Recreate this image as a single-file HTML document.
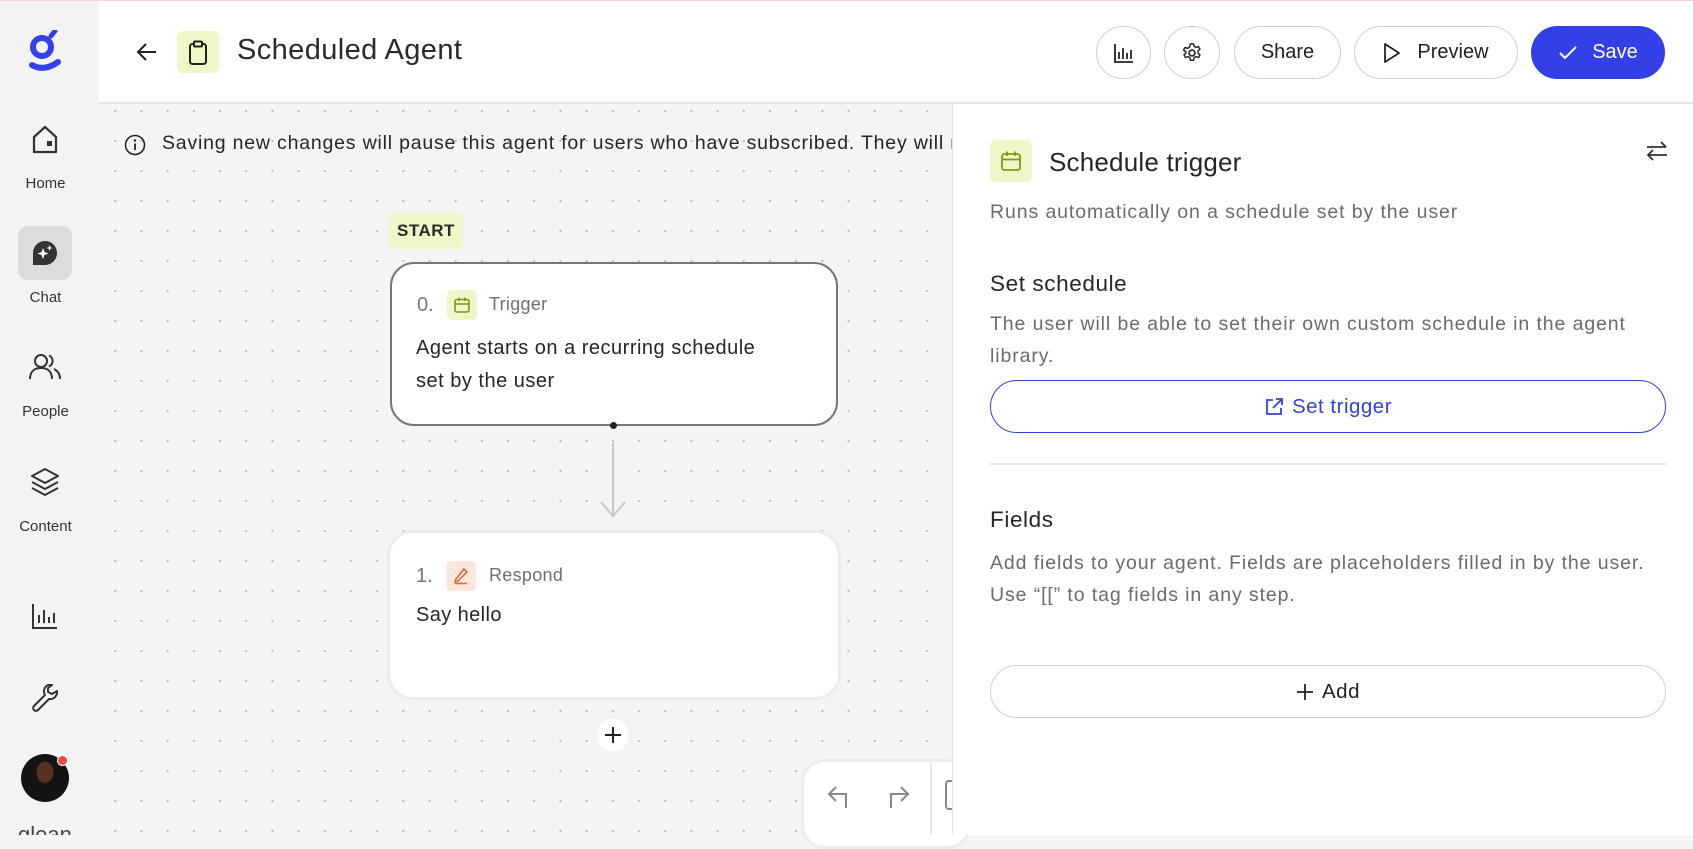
<!DOCTYPE html>
<html><head><meta charset="utf-8"><style>
*{box-sizing:border-box;margin:0;padding:0}
body{width:1693px;height:835px;overflow:hidden;position:relative;background:#f4f4f4;font-family:"Liberation Sans",sans-serif;color:#222}
.a{position:absolute}
.canvas{left:99px;top:104px;width:853px;height:731px;background-color:#f4f4f4;background-image:radial-gradient(circle,#b8b8b8 0.9px,transparent 1.2px);background-size:26.2px 30px;background-position:-23px -8px}
.side{left:0;top:0;width:99px;height:835px;background:#f3f3f3;overflow:hidden}
.lbl{width:99px;text-align:center;font-size:15px;color:#333;left:-4px}
.header{left:99px;top:0;width:1594px;height:104px;background:#fff;border-bottom:2px solid #e6e6e6}
.btn{border:1.5px solid #cfcfcf;border-radius:28px;background:#fff;display:flex;align-items:center;justify-content:center;font-size:20px;color:#222;height:53px;top:26px}
.panel{left:952px;top:104px;width:741px;height:731px;background:#fff;border-left:1.5px solid #e3e3e3}
.ptext{font-size:19.5px;color:#6b6b6b;line-height:32px;letter-spacing:0.9px}
.h2{font-size:22.5px;color:#262626;letter-spacing:0.6px}
</style></head><body>
<div class="a" style="left:0;top:0;width:1693px;height:1px;background:#f3d4da;z-index:5"></div>
<div class="a canvas"></div>
<div class="a side">
 <svg class="a" style="left:27px;top:30px" width="36" height="42" viewBox="0 0 36 42"><circle cx="15" cy="17" r="9" fill="none" stroke="#3342e8" stroke-width="6"/><path d="M24 6 L28 1" stroke="#3342e8" stroke-width="5" stroke-linecap="round"/><path d="M5 35 Q17 42 31 32" fill="none" stroke="#3342e8" stroke-width="6" stroke-linecap="round"/></svg>
 <svg class="a" style="left:31px;top:125px" width="28" height="30" viewBox="0 0 28 30"><path d="M3 12 L14 2 L25 12 V27 H3 Z" fill="none" stroke="#333" stroke-width="2.2" stroke-linejoin="round"/><rect x="16" y="16" width="5" height="5" fill="#333"/></svg>
 <div class="a lbl" style="top:175px;left:-4px">Home</div>
 <div class="a" style="left:18px;top:226px;width:54px;height:54px;background:#dcdcdc;border-radius:10px"></div>
 <svg class="a" style="left:30px;top:238px" width="30" height="30" viewBox="0 0 30 30"><path d="M15 3 A12 12 0 1 1 15 27 H3 V15 A12 12 0 0 1 15 3Z" fill="#333"/><path d="M13 10 L14.5 14 L18.5 15.5 L14.5 17 L13 21 L11.5 17 L7.5 15.5 L11.5 14Z" fill="#fff"/><path d="M19.5 7 L20.3 9.2 L22.5 10 L20.3 10.8 L19.5 13 L18.7 10.8 L16.5 10 L18.7 9.2Z" fill="#fff"/></svg>
 <div class="a lbl" style="top:289px">Chat</div>
 <svg class="a" style="left:28px;top:352px" width="34" height="30" viewBox="0 0 34 30"><circle cx="13" cy="9" r="6" fill="none" stroke="#333" stroke-width="2"/><path d="M2 27 C2 19 7 16 13 16 C19 16 24 19 24 27" fill="none" stroke="#333" stroke-width="2"/><path d="M21 3.5 A6 6 0 0 1 21 14.5 M26 17 C30 19 32 22 32 27" fill="none" stroke="#333" stroke-width="2"/></svg>
 <div class="a lbl" style="top:403px">People</div>
 <svg class="a" style="left:29px;top:466px" width="32" height="32" viewBox="0 0 32 32"><path d="M16 3 L29 10 L16 17 L3 10Z M3 16 L16 23 L29 16 M3 22 L16 29 L29 22" fill="none" stroke="#333" stroke-width="2" stroke-linejoin="round"/></svg>
 <div class="a lbl" style="top:518px">Content</div>
 <svg class="a" style="left:31px;top:602px" width="28" height="28" viewBox="0 0 28 28"><path d="M2 2 V26 H26 M8 21 V13 M13 21 V8 M18 21 V15 M23 21 V11" fill="none" stroke="#333" stroke-width="2"/></svg>
 <svg class="a" style="left:31px;top:682px" width="28" height="30" viewBox="0 0 28 30"><path d="M17 3 A7 7 0 0 0 14 13 L3 24 A2.5 2.5 0 0 0 7 28 L18 17 A7 7 0 0 0 26 9 L21 12 L17 10 L17 6 L21 3 Z" fill="none" stroke="#333" stroke-width="2" stroke-linejoin="round"/></svg>
 <div class="a" style="left:21px;top:754px;width:48px;height:48px;border-radius:50%;background:radial-gradient(ellipse at 50% 38%,#5a3022 0 8px,#141414 9px)"></div>
 <div class="a" style="left:57px;top:755px;width:11px;height:11px;border-radius:50%;background:#f04848;border:1.5px solid #fff"></div>
 <div class="a" style="left:18px;top:822px;font-size:22px;color:#444">glean</div>
</div>
<div class="a header">
 <svg class="a" style="left:37px;top:42px" width="22" height="20" viewBox="0 0 22 20"><path d="M20 10 H3 M10 2 L2 10 L10 18" fill="none" stroke="#222" stroke-width="2"/></svg>
 <div class="a" style="left:78px;top:31px;width:42px;height:42px;background:#eef7c8;border-radius:6px"></div>
 <svg class="a" style="left:88px;top:40px" width="22" height="26" viewBox="0 0 22 26"><rect x="3" y="4" width="16" height="20" rx="2.5" fill="none" stroke="#222" stroke-width="2"/><rect x="7" y="1.5" width="8" height="5" rx="1" fill="#eef7c8" stroke="#222" stroke-width="2"/></svg>
 <div class="a" style="left:138px;top:34px;font-size:29px;color:#2a2a2a;letter-spacing:0.4px">Scheduled Agent</div>
 <div class="a btn" style="left:997px;width:55px"><svg width="20" height="20" viewBox="0 0 20 20"><path d="M1 1 V19 H19 M5 16 V9 M9 16 V5 M13 16 V10 M17 16 V7" fill="none" stroke="#222" stroke-width="1.8"/></svg></div>
 <div class="a btn" style="left:1065px;width:56px"><svg width="22" height="22" viewBox="0 0 24 24"><circle cx="12" cy="12" r="3.2" fill="none" stroke="#222" stroke-width="1.8"/><path d="M10.3 2h3.4l.6 2.8 2 1.1 2.7-.9 1.7 2.9-2.1 1.9v2.3l2.1 1.9-1.7 2.9-2.7-.9-2 1.1-.6 2.8h-3.4l-.6-2.8-2-1.1-2.7.9-1.7-2.9 2.1-1.9V10.8L2.7 8.9l1.7-2.9 2.7.9 2-1.1z" fill="none" stroke="#222" stroke-width="1.6" stroke-linejoin="round"/></svg></div>
 <div class="a btn" style="left:1135px;width:107px">Share</div>
 <div class="a btn" style="left:1255px;width:164px"><svg width="18" height="22" viewBox="0 0 18 22" style="margin-right:16px"><path d="M2 2 L16 11 L2 20Z" fill="none" stroke="#222" stroke-width="1.8" stroke-linejoin="round"/></svg>Preview</div>
 <div class="a btn" style="left:1432px;width:134px;background:#3340e8;border-color:#3340e8;color:#fff"><svg width="20" height="16" viewBox="0 0 20 16" style="margin-right:14px"><path d="M2 8 L7 13 L18 2" fill="none" stroke="#fff" stroke-width="2"/></svg>Save</div>
</div>
<svg class="a" style="left:124px;top:134px" width="22" height="22" viewBox="0 0 22 22"><circle cx="11" cy="11" r="9.5" fill="none" stroke="#222" stroke-width="1.6"/><path d="M11 9.5 V16" stroke="#222" stroke-width="1.8"/><circle cx="11" cy="6.5" r="1.2" fill="#222"/></svg>
<div class="a" style="left:162px;top:132px;font-size:19.5px;letter-spacing:0.8px;color:#262626;white-space:nowrap;width:790px;overflow:hidden">Saving new changes will pause this agent for users who have subscribed. They will need to re-subscribe.</div>
<div class="a" style="left:389px;top:213px;width:74px;height:36px;background:#eef7c8;border-radius:6px;font-size:17px;font-weight:bold;color:#2a2a2a;display:flex;align-items:center;justify-content:center;letter-spacing:.5px">START</div>
<div class="a" style="left:390px;top:262px;width:448px;height:164px;background:#fff;border:2.5px solid #767676;border-radius:24px"></div>
<div class="a" style="left:417px;top:294px;font-size:20px;color:#777">0.</div>
<div class="a" style="left:447px;top:290px;width:30px;height:30px;background:#eef7c8;border-radius:5px"></div>
<svg class="a" style="left:453px;top:296px" width="18" height="18" viewBox="0 0 18 18"><rect x="2" y="3.5" width="14" height="12.5" rx="2" fill="none" stroke="#7a9a12" stroke-width="1.6"/><path d="M2 8 H16 M6 1.5 V5 M12 1.5 V5" stroke="#7a9a12" stroke-width="1.6"/></svg>
<div class="a" style="left:489px;top:294px;font-size:18px;color:#707070;letter-spacing:0.3px">Trigger</div>
<div class="a" style="left:416px;top:332px;font-size:20px;color:#262626;line-height:33px;letter-spacing:0.5px">Agent starts on a recurring schedule<br>set by the user</div>
<div class="a" style="left:610px;top:422px;width:7px;height:7px;border-radius:50%;background:#222"></div>
<div class="a" style="left:612px;top:443px;width:2px;height:72px;background:#c8c8c8"></div>
<svg class="a" style="left:599px;top:490px" width="28" height="28" viewBox="0 0 28 28"><path d="M2 12 L14 26 L26 12" fill="none" stroke="#c8c8c8" stroke-width="2"/></svg>
<div class="a" style="left:387px;top:530px;width:454px;height:170px;background:#fff;border:3.5px solid #ececec;border-radius:26px"></div>
<div class="a" style="left:416px;top:565px;font-size:20px;color:#777">1.</div>
<div class="a" style="left:446px;top:561px;width:30px;height:30px;background:#fde6dc;border-radius:5px"></div>
<svg class="a" style="left:452px;top:567px" width="18" height="18" viewBox="0 0 18 18"><path d="M12 2 L15 5 L6 14 L3 15 L4 12Z M3 16.5 H15" fill="none" stroke="#e8602a" stroke-width="1.5"/></svg>
<div class="a" style="left:489px;top:565px;font-size:18px;color:#707070;letter-spacing:0.3px">Respond</div>
<div class="a" style="left:416px;top:604px;font-size:20px;color:#262626;letter-spacing:0.4px">Say hello</div>
<div class="a" style="left:597px;top:719px;width:32px;height:32px;border-radius:50%;background:#fff;display:flex;align-items:center;justify-content:center"><svg width="18" height="18" viewBox="0 0 18 18"><path d="M9 1 V17 M1 9 H17" stroke="#222" stroke-width="2"/></svg></div>
<div class="a" style="left:801px;top:759px;width:170px;height:90px;background:#fff;border:3px solid #ececec;border-radius:24px"></div>
<svg class="a" style="left:826px;top:782px" width="26" height="28" viewBox="0 0 26 28"><path d="M20 26 V12 H4 M10 5 L3 12 L10 19" fill="none" stroke="#888" stroke-width="2"/></svg>
<svg class="a" style="left:886px;top:782px" width="26" height="28" viewBox="0 0 26 28"><path d="M5 26 V12 H21 M15 5 L22 12 L15 19" fill="none" stroke="#888" stroke-width="2"/></svg>
<div class="a" style="left:930px;top:762px;width:1.5px;height:73px;background:#e6e6e6"></div>
<div class="a" style="left:945px;top:780px;width:10px;height:30px;border:2px solid #888;border-radius:4px"></div>
<div class="a panel">
 <div class="a" style="left:37px;top:36px;width:42px;height:42px;background:#eef7c8;border-radius:6px"></div>
 <svg class="a" style="left:47px;top:46px" width="22" height="22" viewBox="0 0 22 22"><rect x="2" y="4" width="18" height="16" rx="2.5" fill="none" stroke="#7a9a12" stroke-width="1.8"/><path d="M2 9.5 H20 M7 1.5 V6 M15 1.5 V6" stroke="#7a9a12" stroke-width="1.8"/></svg>
 <div class="a" style="left:96px;top:43px;font-size:26px;color:#262626;letter-spacing:0.2px">Schedule trigger</div>
 <svg class="a" style="left:692px;top:36px" width="24" height="22" viewBox="0 0 24 22"><path d="M2 7 H21 M16 2 L21 7 M22 15 H3 M8 10 L3 15 L8 20" fill="none" stroke="#333" stroke-width="1.8"/></svg>
 <div class="a ptext" style="left:37px;top:92px">Runs automatically on a schedule set by the user</div>
 <div class="a h2" style="left:37px;top:167px">Set schedule</div>
 <div class="a ptext" style="left:37px;top:204px;width:676px">The user will be able to set their own custom schedule in the agent library.</div>
 <div class="a" style="left:37px;top:276px;width:676px;height:53px;border:1.5px solid #3340e8;border-radius:27px;display:flex;align-items:center;justify-content:center;color:#3340e8;font-size:20.5px;letter-spacing:0.5px"><svg width="20" height="20" viewBox="0 0 20 20" style="margin-right:8px"><path d="M9 3 H3 V17 H17 V11 M12 2 H18 V8 M18 2 L9 11" fill="none" stroke="#3340e8" stroke-width="1.8"/></svg>Set trigger</div>
 <div class="a" style="left:37px;top:359px;width:676px;height:1.5px;background:#e6e6e6"></div>
 <div class="a h2" style="left:37px;top:403px">Fields</div>
 <div class="a ptext" style="left:37px;top:443px;width:676px">Add fields to your agent. Fields are placeholders filled in by the user. Use “[[” to tag fields in any step.</div>
 <div class="a" style="left:37px;top:561px;width:676px;height:53px;border:1.5px solid #cfcfcf;border-radius:27px;display:flex;align-items:center;justify-content:center;color:#222;font-size:20.5px;letter-spacing:0.5px"><svg width="18" height="18" viewBox="0 0 18 18" style="margin-right:8px"><path d="M9 1 V17 M1 9 H17" stroke="#222" stroke-width="1.8"/></svg>Add</div>
</div>
</body></html>
